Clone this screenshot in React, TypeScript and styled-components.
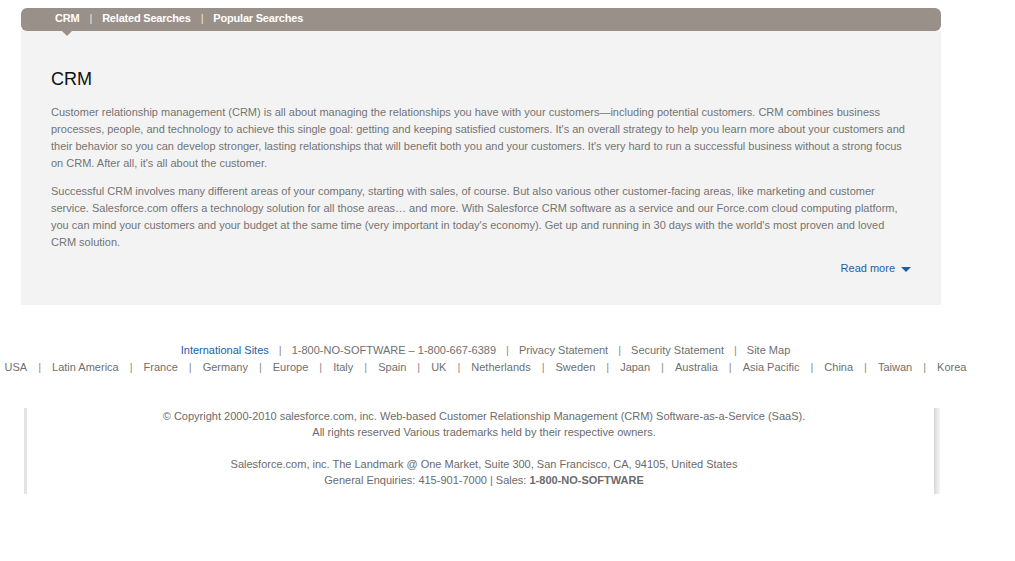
import React from "react";
import styled, { createGlobalStyle } from "styled-components";

const Global = createGlobalStyle`
  html, body { margin: 0; padding: 0; background: #fff; }
  body { font-family: "Liberation Sans", Arial, sans-serif; }
`;

const Page = styled.div`
  width: 1015px;
  padding-top: 8px;
`;

const Panel = styled.section`
  margin-left: 21px;
  width: 920px;
`;

const TabBar = styled.nav`
  position: relative;
  height: 23px;
  box-sizing: border-box;
  padding: 0 0 3px 34px;
  background: #9a908a;
  border-radius: 6px;
  display: flex;
  align-items: center;
  font-size: 11px;
  font-weight: bold;
  letter-spacing: -0.2px;
  color: #fff;
`;

const Notch = styled.span`
  position: absolute;
  left: 41px;
  top: 23px;
  width: 0;
  height: 0;
  border-left: 5px solid transparent;
  border-right: 5px solid transparent;
  border-top: 5px solid #9a908a;
`;

const Tab = styled.span`
  color: #fff;
`;

const TabSep = styled.span`
  margin: 0 10px 0 10px;
  font-weight: normal;
  color: #f2e7d5;
`;

const Box = styled.div`
  background: #f3f3f3;
  padding: 37px 30px 28px;
`;

const Heading = styled.h1`
  margin: 0 0 14px;
  font-size: 18px;
  line-height: 22px;
  font-weight: normal;
  color: #111;
`;

const Para = styled.p`
  margin: 0 0 11px;
  font-size: 11px;
  line-height: 17px;
  color: #737373;
`;

const MoreRow = styled.div`
  display: flex;
  justify-content: flex-end;
  margin-top: -2px;
`;

const MoreLink = styled.a`
  display: inline-flex;
  align-items: center;
  gap: 6px;
  font-size: 11px;
  line-height: 17px;
  color: #1c5ea6;
  text-decoration: none;
`;

const Caret = styled.span`
  width: 0;
  height: 0;
  border-left: 5px solid transparent;
  border-right: 5px solid transparent;
  border-top: 5px solid #1c5ea6;
  margin-top: 2px;
`;

const Footer = styled.footer`
  width: 971px;
  margin-top: 37px;
  text-align: center;
  font-size: 11px;
  line-height: 17px;
  color: #6f6f6f;
  white-space: nowrap;
`;

const FootLine = styled.div``;

const FootLink = styled.a<{ $blue?: boolean }>`
  color: ${(p) => (p.$blue ? "#1c5ea6" : "#6f6f6f")};
  text-decoration: none;
`;

const Pipe = styled.span<{ $wide?: boolean }>`
  margin: 0 ${(p) => (p.$wide ? "11px" : "10px")};
  color: #8a8a8a;
`;

const Legal = styled.div`
  margin: 32px 0 0 24px;
  width: 916px;
  padding: 0 0 6px 4px;
  box-sizing: border-box;
  background: linear-gradient(
    to right,
    #e2e2e2 0,
    #e6e6e6 3px,
    transparent 3px,
    transparent calc(100% - 6px),
    #d6d6d6 calc(100% - 6px),
    #e8e8e8 calc(100% - 3px),
    #f6f6f6 100%
  );
  text-align: center;
  font-size: 11px;
  line-height: 16px;
  color: #6b6b6b;
`;

const LegalLine = styled.div<{ $gap?: boolean }>`
  margin-top: ${(p) => (p.$gap ? "16px" : "0")};
`;

const intl = [
  "USA",
  "Latin America",
  "France",
  "Germany",
  "Europe",
  "Italy",
  "Spain",
  "UK",
  "Netherlands",
  "Sweden",
  "Japan",
  "Australia",
  "Asia Pacific",
  "China",
  "Taiwan",
  "Korea",
];

const top = [
  { t: "International Sites", blue: true },
  { t: "1-800-NO-SOFTWARE – 1-800-667-6389" },
  { t: "Privacy Statement" },
  { t: "Security Statement" },
  { t: "Site Map" },
];

export default function App() {
  return (
    <Page>
      <Global />
      <Panel>
        <TabBar>
          <Tab>CRM</Tab>
          <TabSep>|</TabSep>
          <Tab>Related Searches</Tab>
          <TabSep>|</TabSep>
          <Tab>Popular Searches</Tab>
          <Notch />
        </TabBar>
        <Box>
          <Heading>CRM</Heading>
          <Para>
            Customer relationship management (CRM) is all about managing the relationships you have with your
            customers—including potential customers. CRM combines business processes, people, and technology to
            achieve this single goal: getting and keeping satisfied customers. It's an overall strategy to help you
            learn more about your customers and their behavior so you can develop stronger, lasting relationships
            that will benefit both you and your customers. It's very hard to run a successful business without a
            strong focus on CRM. After all, it's all about the customer.
          </Para>
          <Para>
            Successful CRM involves many different areas of your company, starting with sales, of course. But also
            various other customer-facing areas, like marketing and customer service. Salesforce.com offers a
            technology solution for all those areas… and more. With Salesforce CRM software as a service and our
            Force.com cloud computing platform, you can mind your customers and your budget at the same time (very
            important in today's economy). Get up and running in 30 days with the world's most proven and loved CRM
            solution.
          </Para>
          <MoreRow>
            <MoreLink href="#">
              Read more <Caret />
            </MoreLink>
          </MoreRow>
        </Box>
      </Panel>
      <Footer>
        <FootLine>
          {top.map((l, i) => (
            <React.Fragment key={l.t}>
              {i > 0 && <Pipe>|</Pipe>}
              <FootLink href="#" $blue={l.blue}>
                {l.t}
              </FootLink>
            </React.Fragment>
          ))}
        </FootLine>
        <FootLine>
          {intl.map((c, i) => (
            <React.Fragment key={c}>
              {i > 0 && <Pipe $wide>|</Pipe>}
              <FootLink href="#">{c}</FootLink>
            </React.Fragment>
          ))}
        </FootLine>
      </Footer>
      <Legal>
        <LegalLine>
          © Copyright 2000-2010 salesforce.com, inc. Web-based Customer Relationship Management (CRM)
          Software-as-a-Service (SaaS).
        </LegalLine>
        <LegalLine>All rights reserved Various trademarks held by their respective owners.</LegalLine>
        <LegalLine $gap>
          Salesforce.com, inc. The Landmark @ One Market, Suite 300, San Francisco, CA, 94105, United States
        </LegalLine>
        <LegalLine>
          General Enquiries: 415-901-7000 | Sales: <b>1-800-NO-SOFTWARE</b>
        </LegalLine>
      </Legal>
    </Page>
  );
}
